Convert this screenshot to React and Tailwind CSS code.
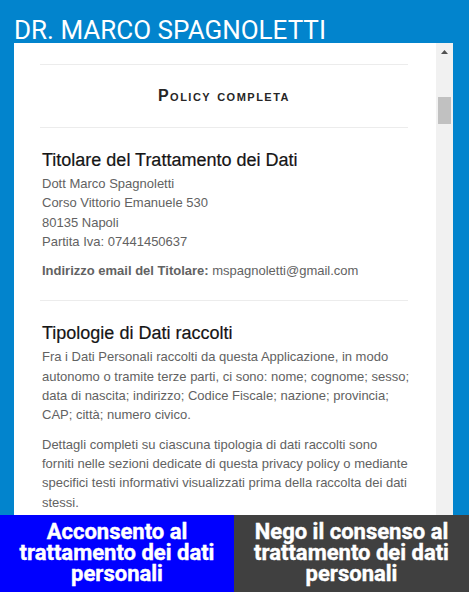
export default function App() {
  const body = "font-['Liberation_Sans',Arial,sans-serif] text-[13px] leading-[19.3px] text-[#626262]";
  const title = "font-['Liberation_Sans',Arial,sans-serif] text-[18px] leading-[22px] text-[#151515] mb-[3px] [-webkit-text-stroke:0.2px_#151515]";
  const btn = "h-full text-white font-['Roboto',sans-serif] font-bold text-[22px] leading-[20.7px] flex items-center justify-center text-center [-webkit-text-stroke:0.4px_#ffffff]";
  return (
    <div className="w-[469px] h-[592px] bg-[#0284cd] flex flex-col overflow-hidden">
      <header className="h-[43px] pl-[14px] pt-[17px] shrink-0">
        <h1 className="font-['Roboto',sans-serif] text-[26px] leading-[26px] text-white font-normal whitespace-nowrap">
          DR. MARCO SPAGNOLETTI
        </h1>
      </header>
      <div className="ml-[14px] w-[439px] h-[472px] shrink-0 flex bg-white overflow-hidden">
        <div className="w-[422px] h-full overflow-hidden pl-[26px] pr-[28px] pt-[21px]">
          <div className="border-t border-b border-[#ececec] pt-[22px] pb-[22px]">
            <h2 className="font-['Liberation_Sans',Arial,sans-serif] text-[16px] leading-[18px] font-bold text-[#262626] text-center [font-variant:small-caps] tracking-[1.5px]">
              Policy completa
            </h2>
          </div>
          <section className="border-b border-[#ececec] pt-[21px] pb-[20px] pl-[2px]">
            <h3 className={title}>Titolare del Trattamento dei Dati</h3>
            <p className={body}>
              Dott Marco Spagnoletti
              <br />
              Corso Vittorio Emanuele 530
              <br />
              80135 Napoli
              <br />
              Partita Iva: 07441450637
            </p>
            <p className={body + " mt-[10px]"}>
              <b className="font-bold">Indirizzo email del Titolare:</b> mspagnoletti@gmail.com
            </p>
          </section>
          <section className="pt-[21px] pl-[2px] w-[372px]">
            <h3 className={title}>Tipologie di Dati raccolti</h3>
            <p className={body}>
              Fra i Dati Personali raccolti da questa Applicazione, in modo
              <br />
              autonomo o tramite terze parti, ci sono: nome; cognome; sesso;
              <br />
              data di nascita; indirizzo; Codice Fiscale; nazione; provincia;
              <br />
              CAP; città; numero civico.
            </p>
            <p className={body + " mt-[10px]"}>
              Dettagli completi su ciascuna tipologia di dati raccolti sono
              <br />
              forniti nelle sezioni dedicate di questa privacy policy o mediante
              <br />
              specifici testi informativi visualizzati prima della raccolta dei dati
              <br />
              stessi.
            </p>
          </section>
        </div>
        <div className="w-[17px] h-full bg-[#f1f1f1] flex flex-col items-center">
          <div className="h-[17px] w-full flex items-center justify-center">
            <svg width="7" height="4" viewBox="0 0 7 4">
              <polygon points="3.5,0 7,4 0,4" fill="#505050" />
            </svg>
          </div>
          <div className="mt-[37px] w-[13px] h-[27px] bg-[#c1c1c1]" />
        </div>
      </div>
      <div className="flex h-[77px] shrink-0">
        <button className={"w-[234px] bg-[#0000ff] " + btn}>
          Acconsento al
          <br />
          trattamento dei dati
          <br />
          personali
        </button>
        <button className={"flex-1 bg-[#404040] " + btn}>
          Nego il consenso al
          <br />
          trattamento dei dati
          <br />
          personali
        </button>
      </div>
    </div>
  );
}
